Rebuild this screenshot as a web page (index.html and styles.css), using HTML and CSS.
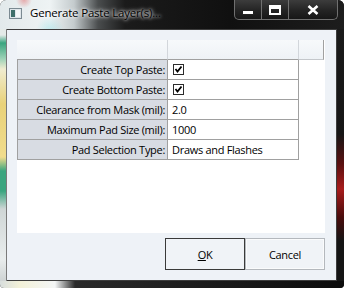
FILE: index.html
```html
<!DOCTYPE html>
<html lang="en">
<head>
    <meta charset="UTF-8">
    <title>Generate Paste Layer(s)...</title>
    <link rel="stylesheet" href="styles.css">
</head>
<body>

    <div class="window">
        <div class="titlebar">
            <svg class="app-icon" width="13" height="11" viewBox="0 0 13 11">
                <rect x="0.5" y="0.5" width="12" height="10" fill="#dfe6ea" stroke="#7b8a92"/>
                <rect x="2" y="2" width="4" height="7" fill="#3f6f6a"/>
                <rect x="7" y="2" width="4" height="7" fill="#f4f7f8"/>
            </svg>
            <span class="title">Generate Paste Layer(s)...</span>

            <div class="caption">
                <div class="cap-btn cap-min">
                    <svg width="12" height="5" viewBox="0 0 12 5">
                        <rect x="0.5" y="0.5" width="11" height="4" fill="#fff" stroke="#222"/>
                    </svg>
                </div>
                <div class="cap-btn cap-max">
                    <svg width="12" height="10" viewBox="0 0 12 10">
                        <rect x="1" y="1" width="10" height="8" fill="none" stroke="#fff" stroke-width="2"/>
                        <rect x="1" y="1" width="10" height="3" fill="#fff"/>
                    </svg>
                </div>
                <div class="cap-btn cap-close">
                    <svg width="12" height="10" viewBox="0 0 12 10">
                        <path d="M1.5 1 L10.5 9 M10.5 1 L1.5 9" stroke="#fff" stroke-width="2.6"/>
                    </svg>
                </div>
            </div>
        </div>

        <div class="frame-row">
            <div class="frame-left"></div>

            <div class="client">
                <div class="props">
                    <div class="hd"></div>
                    <div class="hd"></div>
                    <div class="hd hd-last"></div>

                    <div class="lbl">Create Top Paste:</div>
                    <div class="val">
                        <svg class="check" width="11" height="11" viewBox="0 0 11 11">
                            <rect x="0.5" y="0.5" width="10" height="10" fill="#fff" stroke="#2b2b2b"/>
                            <path d="M2.5 5 L4.5 7.5 L8.5 2.5" fill="none" stroke="#000" stroke-width="1.8"/>
                        </svg>
                    </div>
                    <div class="gap"></div>

                    <div class="lbl">Create Bottom Paste:</div>
                    <div class="val">
                        <svg class="check" width="11" height="11" viewBox="0 0 11 11">
                            <rect x="0.5" y="0.5" width="10" height="10" fill="#fff" stroke="#2b2b2b"/>
                            <path d="M2.5 5 L4.5 7.5 L8.5 2.5" fill="none" stroke="#000" stroke-width="1.8"/>
                        </svg>
                    </div>
                    <div class="gap"></div>

                    <div class="lbl">Clearance from Mask (mil):</div>
                    <div class="val">2.0</div>
                    <div class="gap"></div>

                    <div class="lbl">Maximum Pad Size (mil):</div>
                    <div class="val">1000</div>
                    <div class="gap"></div>

                    <div class="lbl">Pad Selection Type:</div>
                    <div class="val">Draws and Flashes</div>
                    <div class="gap"></div>
                </div>

                <div class="actions">
                    <button class="btn btn-default"><span class="u">O</span>K</button>
                    <button class="btn">Cancel</button>
                </div>
            </div>

            <div class="frame-right"></div>
        </div>

        <div class="frame-bottom"></div>
    </div>

</body>
</html>
```

FILE: styles.css
```css
* {
    box-sizing: border-box;
}

body {
    margin: 0;
    background: #fff;
    font-family: "Open Sans", "Noto Sans", sans-serif;
    font-size: 11px;
    letter-spacing: -0.3px;
    color: #000;
}

.window {
    width: 344px;
    height: 288px;
    display: flex;
    flex-direction: column;
    background: #151515;
    border-radius: 6px 6px 4px 4px;
    overflow: hidden;
}

/* title bar */
.titlebar {
    height: 29px;
    display: flex;
    align-items: flex-start;
    background:
        radial-gradient(circle at 24px 0, rgba(225, 70, 70, 0.4), transparent 8px),
        radial-gradient(circle at 50px 30px, rgba(90, 210, 220, 0.3), transparent 14px),
        linear-gradient(90deg, #e2e9eb 0, #eef3f4 50px, #c4cbcd 74px, #4a4d4e 98px, #1b1b1b 125px, #101010 230px, #1d1d1d 100%);
}

.app-icon {
    margin: 8px 0 0 9px;
}

.title {
    margin: 5px 0 0 8px;
    font-size: 11.5px;
    letter-spacing: -0.2px;
    text-shadow: 0 0 5px #fff, 0 0 3px #fff;
}

.caption {
    margin-left: auto;
    margin-right: 6px;
    display: flex;
    height: 20px;
}

.cap-btn {
    height: 20px;
    border: 1px solid #707070;
    border-top: none;
    background: linear-gradient(#3c3c3c, #242424 55%, #171717);
    display: flex;
    align-items: center;
    justify-content: center;
}

.cap-min {
    width: 28px;
    border-radius: 0 0 0 5px;
    padding-top: 5px;
}

.cap-max {
    width: 27px;
    border-left: none;
}

.cap-close {
    width: 49px;
    border-left: none;
    border-radius: 0 0 5px 0;
}

/* frame */
.frame-row {
    flex: 1;
    display: flex;
}

.frame-left {
    width: 7px;
    background: linear-gradient(#e4eae8 0, #e4eae8 6px, #3aa57f 14px, #9fd3b8 30px, #f0ecd0 40px, #e9d27a 75px, #f1dc8c 128px, #3aa57f 142px, #3aa57f 162px, #cfd6d6 180px, #e9eded 230px, #cfd4d4 100%);
    border-right: 1px solid #7a7a7a;
}

.frame-right {
    width: 7px;
    background: linear-gradient(#1a1a1a 0, #161616 105px, #5a1010 135px, #a81c1c 160px, #4a0c0c 188px, #151515 212px, #151515 100%);
}

.frame-bottom {
    height: 7px;
    background: linear-gradient(90deg, #d8dedd 0, #f3f1d8 20px, #f4f6f6 55px, #2a2a2a 75px, #0c0c0c 100%);
}

/* client area */
.client {
    flex: 1;
    display: flex;
    flex-direction: column;
    border: 1px solid #3d3d3d;
    border-left: none;
    background: #eef2f7;
    padding: 10px 11px 10px 10px;
}

.props {
    height: 193px;
    background: #fff;
    display: grid;
    grid-template-columns: 151px 131px 25px;
    grid-auto-rows: 20px;
    align-content: start;
}

.hd {
    background: linear-gradient(#f7f9fb, #eef2f6);
    border-right: 1px solid #d2d6db;
    border-bottom: 1px solid #a0a0a0;
}

.hd-last {
    border-right: 1px solid #a0a0a0;
    border-bottom: 1px solid #c4c7cb;
}

.lbl {
    background: #d8dce3;
    border: 1px solid #a0a0a0;
    border-top: none;
    text-align: right;
    padding-right: 2px;
    line-height: 19px;
    white-space: nowrap;
}

.val {
    border-right: 1px solid #a0a0a0;
    border-bottom: 1px solid #a0a0a0;
    padding-left: 4px;
    display: flex;
    align-items: center;
    white-space: nowrap;
}

.check {
    display: block;
    margin-left: 1px;
}

/* buttons */
.actions {
    display: flex;
    justify-content: flex-end;
    margin-top: 5px;
}

.btn {
    width: 80px;
    height: 32px;
    border: 1px solid #b4b8bd;
    background: #f0f3f7;
    box-shadow: inset 0 0 0 1px #fafbfc;
    font-family: inherit;
    font-size: 11px;
    letter-spacing: -0.3px;
    color: #000;
    padding: 0;
}

.btn-default {
    border-color: #3a3a3a;
    box-shadow: none;
}

.u {
    text-decoration: underline;
}
```
